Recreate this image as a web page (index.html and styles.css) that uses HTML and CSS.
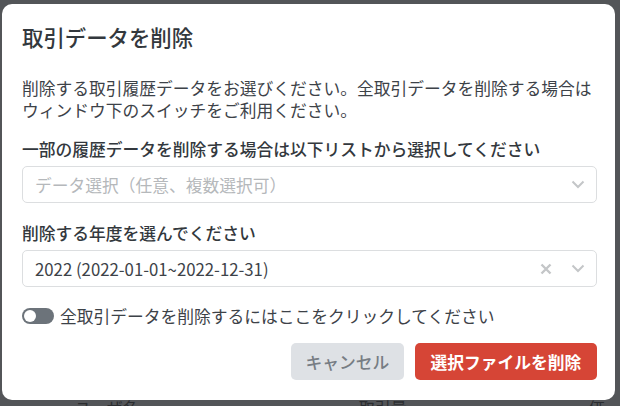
FILE: index.html
```html
<!DOCTYPE html>
<html lang="ja">
<head>
  <meta charset="UTF-8" />
  <title>取引データを削除</title>
  <link rel="stylesheet" href="styles.css">
</head>
<body>
  <div class="page">
    <div class="page-row">
      <span class="c1">ユーザ名</span>
      <span class="c2">取引量</span>
      <span class="c3">価格</span>
    </div>
  </div>

  <div class="modal">
    <h2 class="title">取引データを削除</h2>
    <p class="lead">削除する取引履歴データをお選びください。全取引データを削除する場合は<br>ウィンドウ下のスイッチをご利用ください。</p>

    <label class="label">一部の履歴データを削除する場合は以下リストから選択してください</label>
    <div class="select">
      <span class="placeholder">データ選択（任意、複数選択可）</span>
      <span class="icons">
        <svg class="chev" width="14" height="9" viewBox="0 0 14 9"><path d="M1.5 1.5 L7 7 L12.5 1.5" fill="none" stroke="#c4c6c8" stroke-width="2"/></svg>
      </span>
    </div>

    <label class="label">削除する年度を選んでください</label>
    <div class="select">
      <span class="value">2022 (2022-01-01~2022-12-31)</span>
      <span class="icons">
        <svg class="clear" width="12" height="12" viewBox="0 0 12 12"><path d="M1.5 1.5 L10.5 10.5 M10.5 1.5 L1.5 10.5" stroke="#c4c6c8" stroke-width="2.4"/></svg>
        <svg class="chev" width="14" height="9" viewBox="0 0 14 9"><path d="M1.5 1.5 L7 7 L12.5 1.5" fill="none" stroke="#c4c6c8" stroke-width="2"/></svg>
      </span>
    </div>

    <div class="switch-row">
      <span class="switch"><span class="knob"></span></span>
      <span>全取引データを削除するにはここをクリックしてください</span>
    </div>

    <div class="actions">
      <button class="btn btn-cancel">キャンセル</button>
      <button class="btn btn-delete">選択ファイルを削除</button>
    </div>
  </div>
</body>
</html>
```

FILE: styles.css
```css
body { margin: 0; background: #535558; font-family: "Noto Sans CJK JP", "Noto Sans", sans-serif; width: 620px; height: 406px; overflow: hidden; position: relative; }
.page { padding-top: 397px; }
.page-row { display: flex; color: #2b2d30; font-size: 16px; line-height: 20px; }
.page-row .c1 { margin-left: 75px; width: 290px; }
.page-row .c2 { width: 235px; }
.modal { position: absolute; left: 2px; top: 4px; width: 575px; height: 396px; background: #fff; border-radius: 10px; padding: 0 18px 0 20px; color: #3d4248; font-size: 16.75px; }
.title { margin: 0; padding-top: 20px; font-size: 21.4px; font-weight: 500; line-height: 26px; color: #33383d; }
.lead { margin: 27px 0 0; line-height: 22px; }
.label { display: block; margin-top: 17px; line-height: 22px; font-weight: 500; color: #33383d; }
.select { display: flex; align-items: center; justify-content: space-between; height: 35px; margin-top: 6px; border: 1px solid #dcdee0; border-radius: 5px; padding: 0 11px 0 12px; }
.select + .label { margin-top: 19px; }
.placeholder { color: #b5b8bb; }
.value { color: #3d4248; }
.icons { display: flex; align-items: center; gap: 19px; }
.chev { display: block; }
.clear { display: block; }
.switch-row { display: flex; align-items: center; gap: 6px; margin-top: 18px; line-height: 22px; }
.switch { width: 32px; height: 16px; border-radius: 8px; background: #6c737a; position: relative; }
.knob { position: absolute; left: 2px; top: 2px; width: 12px; height: 12px; border-radius: 50%; background: #fff; }
.actions { display: flex; justify-content: flex-end; gap: 11px; margin-top: 16px; }
.btn { height: 37px; border: none; border-radius: 5px; font-family: inherit; font-size: 16.75px; padding: 0; }
.btn-cancel { width: 113px; background: #dee1e5; color: #777d84; font-weight: 500; }
.btn-delete { width: 182px; background: #d64536; color: #fff; font-weight: 700; }
```
